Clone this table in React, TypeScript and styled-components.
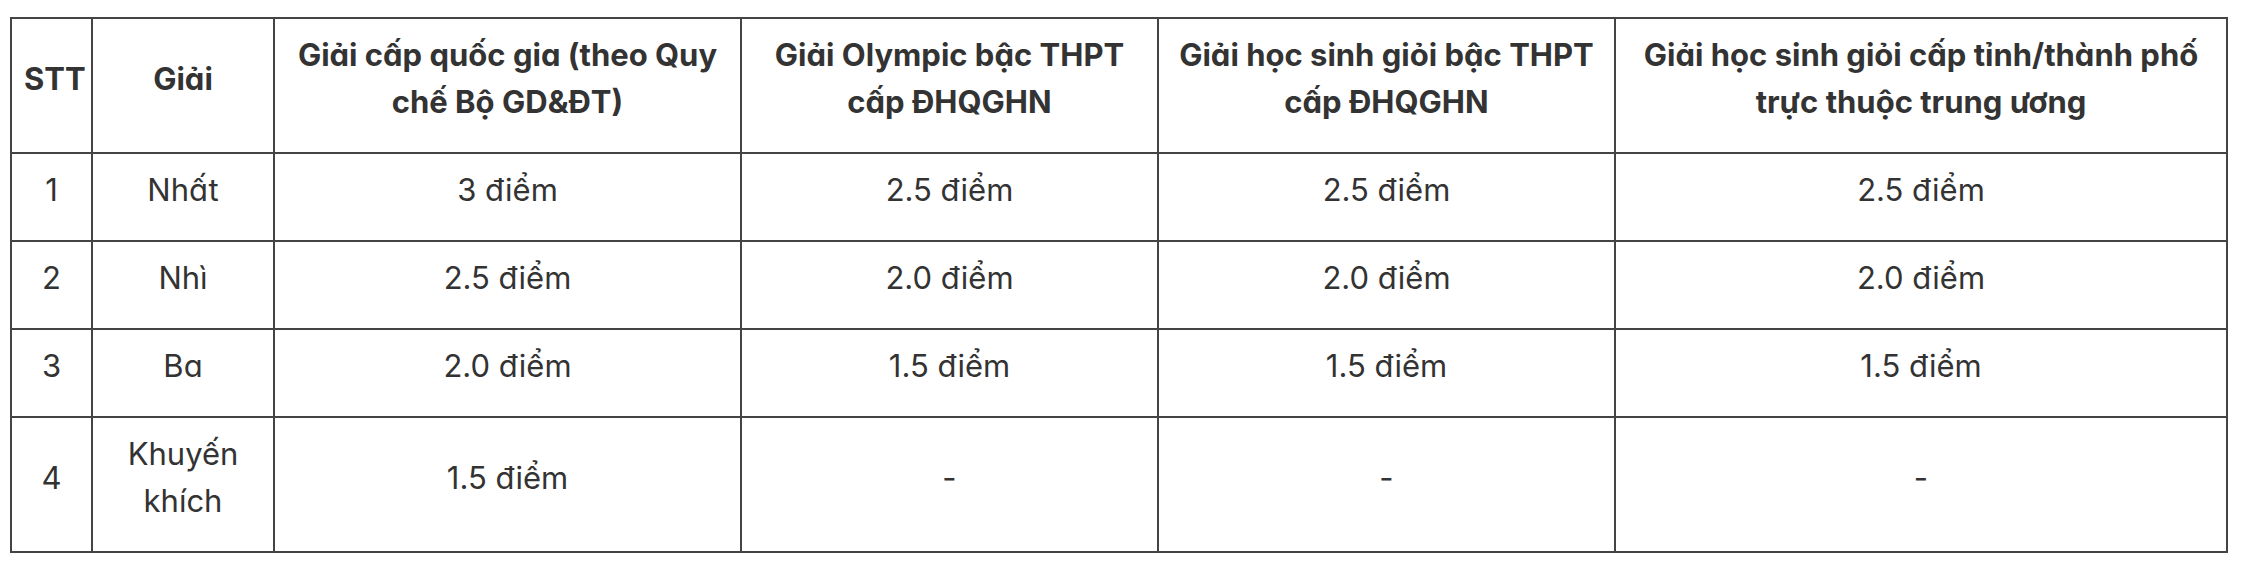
import React from 'react';
import styled, { createGlobalStyle } from 'styled-components';

const GlobalStyle = createGlobalStyle`
  body {
    margin: 0;
    background: #ffffff;
  }
`;

const LINE = '#444444';
const TEXT = '#333333';

const Page = styled.div`
  padding: 17px 19px 0 10px;
  font-family: Inter, Lato, "Noto Sans", sans-serif;
  font-feature-settings: "cv11";
  color: ${TEXT};
`;

const Table = styled.table`
  width: 2218px;
  border-collapse: collapse;
  table-layout: fixed;
`;

// text sits a little above the middle of each cell, as in the original
const HeadCell = styled.th`
  border: 2px solid ${LINE};
  padding: 12px 12px 27px;
  font-size: 31px;
  line-height: 47px;
  font-weight: 700;
  text-align: center;
  vertical-align: middle;
`;

const Cell = styled.td`
  border: 2px solid ${LINE};
  padding: 12px 12px 27px;
  font-size: 31px;
  line-height: 47px;
  font-weight: 400;
  text-align: center;
  vertical-align: middle;
`;

const COLUMNS = [81, 182, 467, 417, 457, 612];

const HEADERS = [
  'STT',
  'Giải',
  'Giải cấp quốc gia (theo Quy chế Bộ GD&ĐT)',
  'Giải Olympic bậc THPT cấp ĐHQGHN',
  'Giải học sinh giỏi bậc THPT cấp ĐHQGHN',
  'Giải học sinh giỏi cấp tỉnh/thành phố trực thuộc trung ương',
];

const ROWS = [
  ['1', 'Nhất', '3 điểm', '2.5 điểm', '2.5 điểm', '2.5 điểm'],
  ['2', 'Nhì', '2.5 điểm', '2.0 điểm', '2.0 điểm', '2.0 điểm'],
  ['3', 'Ba', '2.0 điểm', '1.5 điểm', '1.5 điểm', '1.5 điểm'],
  ['4', 'Khuyến khích', '1.5 điểm', '-', '-', '-'],
];

const App: React.FC = () => {
  return (
    <Page>
      <GlobalStyle />
      <Table>
        <colgroup>
          {COLUMNS.map((w, i) => (
            <col key={i} style={{ width: w }} />
          ))}
        </colgroup>
        <thead>
          <tr>
            {HEADERS.map((h) => (
              <HeadCell key={h}>{h}</HeadCell>
            ))}
          </tr>
        </thead>
        <tbody>
          {ROWS.map((row) => (
            <tr key={row[0]}>
              {row.map((value, i) => (
                <Cell key={i}>{value}</Cell>
              ))}
            </tr>
          ))}
        </tbody>
      </Table>
    </Page>
  );
};

export default App;
